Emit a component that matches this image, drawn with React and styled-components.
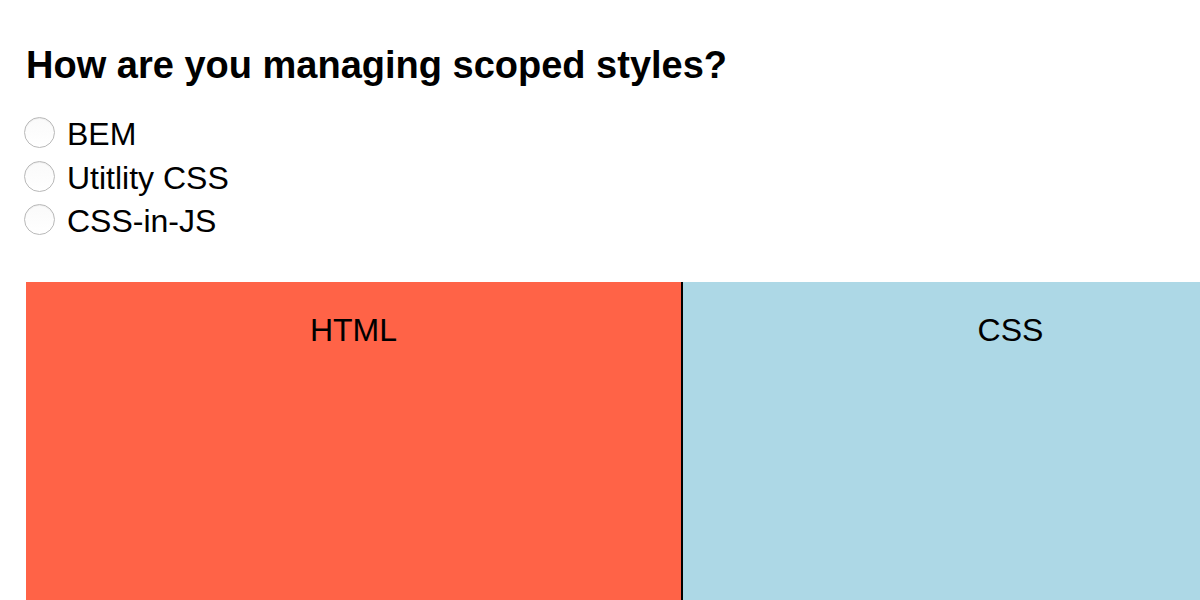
import styled, { createGlobalStyle } from 'styled-components'

const GlobalStyle = createGlobalStyle`
  body {
    margin: 0;
    background: #fff;
    font-family: "Liberation Sans", Arial, sans-serif;
    color: #000;
  }
`

const options = ['BEM', 'Utitlity CSS', 'CSS-in-JS']

function App() {
  return (
    <>
      <GlobalStyle />
      <Page>
        <Question>How are you managing scoped styles?</Question>
        <Options>
          {options.map((opt) => (
            <Option key={opt}>
              <Radio type="radio" name="scoped" />
              <span>{opt}</span>
            </Option>
          ))}
        </Options>
        <Panels>
          <Panel $bg="#ff6347" $divider>HTML</Panel>
          <Panel $bg="#add8e6">CSS</Panel>
        </Panels>
      </Page>
    </>
  )
}

const Page = styled.div`
  width: 1200px;
  height: 600px;
  overflow: hidden;
  box-sizing: border-box;
  padding: 44px 0 0 26px;
`

const Question = styled.h3`
  margin: 0;
  font-size: 38px;
  font-weight: 700;
  line-height: 43px;
`

const Options = styled.div`
  margin-top: 26px;
  display: flex;
  flex-direction: column;
`

const Option = styled.label`
  display: flex;
  align-items: center;
  height: 43.5px;
  font-size: 32px;
  gap: 12px;
`

const Radio = styled.input`
  appearance: none;
  margin: 0 0 0 -2px;
  width: 31px;
  height: 31px;
  border-radius: 50%;
  border: 1.5px solid #b9b9b9;
  background: linear-gradient(#fafafa, #ffffff);
  box-shadow: inset 0 1px 1px rgba(0, 0, 0, 0.06);
  box-sizing: border-box;
  position: relative;
  top: -2px;
`

const Panels = styled.div`
  margin-top: 38px;
  display: grid;
  grid-template-columns: 657px 655px;
  height: 330px;
`

const Panel = styled.div`
  background: ${(p) => p.$bg};
  border-right: ${(p) => (p.$divider ? '2px solid #000' : 'none')};
  font-size: 32px;
  text-align: center;
  padding-top: 30px;
`

export default App
